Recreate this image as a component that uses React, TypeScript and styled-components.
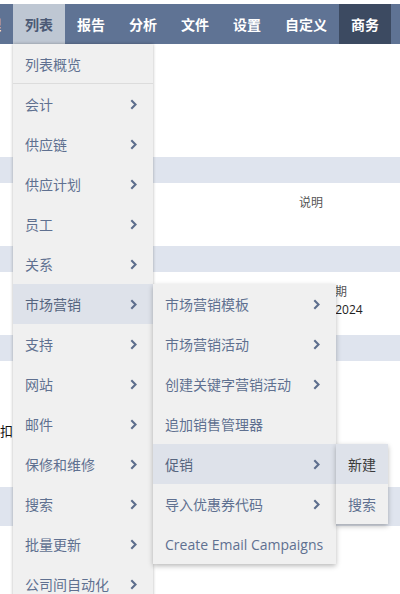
import React from 'react';
import styled, { createGlobalStyle } from 'styled-components';

const GlobalStyle = createGlobalStyle`
  html, body {
    margin: 0;
    padding: 0;
    background: #ffffff;
    overflow: hidden;
  }
  body {
    font-family: "Open Sans", "Noto Sans CJK SC", sans-serif;
  }
  * { box-sizing: border-box; }
`;

const Page = styled.div`
  width: 400px;
  height: 594px;
  overflow: hidden;
  padding-top: 4px;
  position: relative;
`;

const NavBar = styled.nav`
  display: flex;
  height: 40px;
  width: 480px;
  margin-left: -39px;
  background: #5f7394;
  position: relative;
  z-index: 10;
`;

type NavVariant = 'normal' | 'active' | 'dark';

const NavItem = styled.div<{ $variant?: NavVariant }>`
  position: relative;
  flex: none;
  display: flex;
  align-items: center;
  padding: 0 12px;
  height: 40px;
  font-size: 14px;
  font-weight: 700;
  white-space: nowrap;
  color: ${(p) => (p.$variant === 'active' ? '#4b5a75' : '#ffffff')};
  background: ${(p) =>
    p.$variant === 'active' ? '#bec7d3' : p.$variant === 'dark' ? '#3c4a61' : 'transparent'};
`;

const Menu = styled.ul<{ $width: number; $sub?: boolean }>`
  position: absolute;
  top: ${(p) => (p.$sub ? '0' : '100%')};
  left: ${(p) => (p.$sub ? '100%' : '0')};
  width: ${(p) => p.$width}px;
  margin: 0;
  padding: 0;
  list-style: none;
  background: #f0f0f0;
  box-shadow: ${(p) =>
    p.$sub ? '0 2px 5px rgba(0, 0, 0, 0.28)' : '0 0 3px rgba(0, 0, 0, 0.3)'};
  font-weight: 400;
  z-index: ${(p) => (p.$sub ? 2 : 1)};
`;

type ItemState = 'normal' | 'open' | 'hover';

const MenuItem = styled.li<{ $state?: ItemState; $divider?: boolean }>`
  position: relative;
  display: flex;
  align-items: center;
  justify-content: space-between;
  height: 40px;
  padding: 0 16px 0 12px;
  font-size: 14px;
  white-space: nowrap;
  color: ${(p) =>
    p.$state === 'hover' ? '#3a3a3a' : p.$state === 'open' ? '#56657f' : '#5f7090'};
  background: ${(p) => (p.$state && p.$state !== 'normal' ? '#dee2ea' : 'transparent')};
  ${(p) => (p.$divider ? 'border-bottom: 1px solid #dcdcdc;' : '')}
`;

const ChevronSvg = styled.svg`
  flex: none;
  width: 7px;
  height: 11px;
  color: #5d6e8d;
`;

const Chevron = () => (
  <ChevronSvg viewBox="0 0 7 11" fill="none">
    <polyline
      points="1.3,1.3 5.5,5.5 1.3,9.7"
      stroke="currentColor"
      strokeWidth="2.1"
      strokeLinecap="butt"
      strokeLinejoin="miter"
    />
  </ChevronSvg>
);

const Content = styled.main`
  display: flex;
  flex-direction: column;
`;

const Spacer = styled.div<{ $h: number }>`
  height: ${(p) => p.$h}px;
`;

const SectionBar = styled.div<{ $h?: number }>`
  height: ${(p) => p.$h ?? 26}px;
  background: #dfe4ee;
`;

const FieldRow = styled.div<{ $h: number }>`
  height: ${(p) => p.$h}px;
  display: grid;
  grid-template-columns: 299px 1fr;
  align-content: start;
  padding-top: 11px;
`;

const FieldCell = styled.div`
  grid-column: 2;
  display: flex;
  flex-direction: column;
`;

const FieldLabel = styled.div`
  font-size: 12px;
  line-height: 18px;
  color: #555555;
`;

const FieldValue = styled.div`
  font-size: 12px;
  line-height: 18px;
  color: #222222;
`;

const LooseRow = styled.div<{ $h: number }>`
  height: ${(p) => p.$h}px;
  padding-top: 61px;
`;

const CutLabel = styled.div`
  margin-left: -13px;
  font-size: 13px;
  line-height: 18px;
  color: #111111;
`;

type Entry = { label: string; sub?: boolean; state?: ItemState; divider?: boolean };

const listMenu: Entry[] = [
  { label: '列表概览', divider: true },
  { label: '会计', sub: true },
  { label: '供应链', sub: true },
  { label: '供应计划', sub: true },
  { label: '员工', sub: true },
  { label: '关系', sub: true },
  { label: '市场营销', sub: true, state: 'open' },
  { label: '支持', sub: true },
  { label: '网站', sub: true },
  { label: '邮件', sub: true },
  { label: '保修和维修', sub: true },
  { label: '搜索', sub: true },
  { label: '批量更新', sub: true },
  { label: '公司间自动化', sub: true },
];

const marketingMenu: Entry[] = [
  { label: '市场营销模板', sub: true },
  { label: '市场营销活动', sub: true },
  { label: '创建关键字营销活动', sub: true },
  { label: '追加销售管理器' },
  { label: '促销', sub: true, state: 'open' },
  { label: '导入优惠券代码', sub: true },
  { label: 'Create Email Campaigns' },
];

const promoMenu: Entry[] = [
  { label: '新建', state: 'hover' },
  { label: '搜索' },
];

const PromoMenu = () => (
  <Menu $width={52} $sub>
    {promoMenu.map((e) => (
      <MenuItem key={e.label} $state={e.state}>
        {e.label}
      </MenuItem>
    ))}
  </Menu>
);

const MarketingMenu = () => (
  <Menu $width={183} $sub>
    {marketingMenu.map((e) => (
      <MenuItem key={e.label} $state={e.state}>
        <span>{e.label}</span>
        {e.sub && <Chevron />}
        {e.label === '促销' && <PromoMenu />}
      </MenuItem>
    ))}
  </Menu>
);

const ListMenu = () => (
  <Menu $width={140}>
    {listMenu.map((e) => (
      <MenuItem key={e.label} $state={e.state} $divider={e.divider}>
        <span>{e.label}</span>
        {e.sub && <Chevron />}
        {e.label === '市场营销' && <MarketingMenu />}
      </MenuItem>
    ))}
  </Menu>
);

const navItems: { label: string; variant?: NavVariant }[] = [
  { label: '管理' },
  { label: '列表', variant: 'active' },
  { label: '报告' },
  { label: '分析' },
  { label: '文件' },
  { label: '设置' },
  { label: '自定义' },
  { label: '商务', variant: 'dark' },
  { label: '支持' },
];

export default function App() {
  return (
    <>
      <GlobalStyle />
      <Page>
        <NavBar>
          {navItems.map((n) => (
            <NavItem key={n.label} $variant={n.variant}>
              {n.label}
              {n.variant === 'active' && <ListMenu />}
            </NavItem>
          ))}
        </NavBar>
        <Content>
          <Spacer $h={113} />
          <SectionBar />
          <FieldRow $h={63}>
            <FieldCell>
              <FieldLabel>说明</FieldLabel>
            </FieldCell>
          </FieldRow>
          <SectionBar />
          <FieldRow $h={63}>
            <FieldCell>
              <FieldLabel>结束日期</FieldLabel>
              <FieldValue>12/31/2024</FieldValue>
            </FieldCell>
          </FieldRow>
          <SectionBar />
          <LooseRow $h={126}>
            <CutLabel>折扣</CutLabel>
          </LooseRow>
          <SectionBar $h={39} />
        </Content>
      </Page>
    </>
  );
}
